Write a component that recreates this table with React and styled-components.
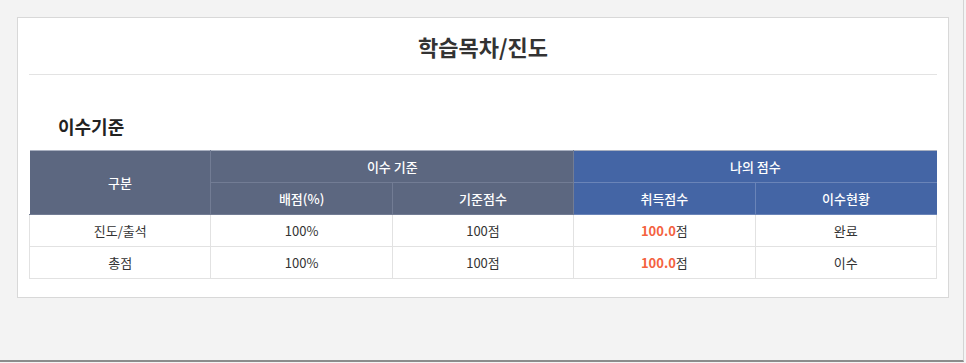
import React from 'react';
import styled, { createGlobalStyle } from 'styled-components';

const GlobalStyle = createGlobalStyle`
  html, body {
    margin: 0;
    padding: 0;
    background: #f4f4f4;
    font-family: "Noto Sans CJK KR", "Noto Sans", sans-serif;
    color: #333;
  }
`;

const headRows = [
  { label: '진도/출석', ratio: '100%', base: '100점', score: '100.0', status: '완료' },
  { label: '총점', ratio: '100%', base: '100점', score: '100.0', status: '이수' },
];

const FrameTag = styled.div`
  box-sizing: border-box;
  width: 964px;
  height: 362px;
  padding: 17px 15px 0 17px;
  background: #f3f3f3;
  border-right: 1px solid #d4d4d4;
  border-bottom: 2px solid #8c8c8c;
`;

const PanelTag = styled.div`
  box-sizing: border-box;
  width: 932px;
  padding: 0 11px 18px;
  background: #fff;
  border: 1px solid #d8d8d8;
`;

const TitleBarTag = styled.h1`
  margin: 0;
  height: 56px;
  display: flex;
  align-items: center;
  justify-content: center;
  font-size: 22px;
  font-weight: 700;
  color: #333;
  border-bottom: 1px solid #e3e3e3;
`;

const SectionTitleTag = styled.h2`
  margin: 0;
  padding: 37px 0 0 29px;
  height: 38px;
  font-size: 18px;
  font-weight: 700;
  line-height: 28px;
  color: #222;
`;

const TableTag = styled.table`
  width: 100%;
  border-collapse: collapse;
  table-layout: fixed;
  font-size: 13px;
`;

const HeadCellTag = styled.th`
  height: 31px;
  padding: 0;
  font-weight: 500;
  color: #fff;
  text-align: center;
  background: ${p => (p.mine ? '#4465a5' : '#5c6780')};
  border: 1px solid ${p => (p.mine ? '#6a84b8' : '#727c94')};
  border-top-color: #a9b0c0;
  &:first-child { border-left: none; }
  &:last-child { border-right: none; }
`;

const CellTag = styled.td`
  height: 31px;
  padding: 0;
  text-align: center;
  color: #333;
  border: 1px solid #e2e2e2;
`;

const ScoreTag = styled.strong`
  color: #f4623f;
  font-weight: 700;
`;

export default function App() {
  return (
    <>
      <GlobalStyle />
      <FrameTag>
        <PanelTag>
          <TitleBarTag>학습목차/진도</TitleBarTag>
          <SectionTitleTag>이수기준</SectionTitleTag>
          <TableTag>
            <thead>
              <tr>
                <HeadCellTag rowSpan={2}>구분</HeadCellTag>
                <HeadCellTag colSpan={2}>이수 기준</HeadCellTag>
                <HeadCellTag colSpan={2} mine>나의 점수</HeadCellTag>
              </tr>
              <tr>
                <HeadCellTag>배점(%)</HeadCellTag>
                <HeadCellTag>기준점수</HeadCellTag>
                <HeadCellTag mine>취득점수</HeadCellTag>
                <HeadCellTag mine>이수현황</HeadCellTag>
              </tr>
            </thead>
            <tbody>
              {headRows.map(row => (
                <tr key={row.label}>
                  <CellTag>{row.label}</CellTag>
                  <CellTag>{row.ratio}</CellTag>
                  <CellTag>{row.base}</CellTag>
                  <CellTag>
                    <ScoreTag>{row.score}</ScoreTag>점
                  </CellTag>
                  <CellTag>{row.status}</CellTag>
                </tr>
              ))}
            </tbody>
          </TableTag>
        </PanelTag>
      </FrameTag>
    </>
  );
}
